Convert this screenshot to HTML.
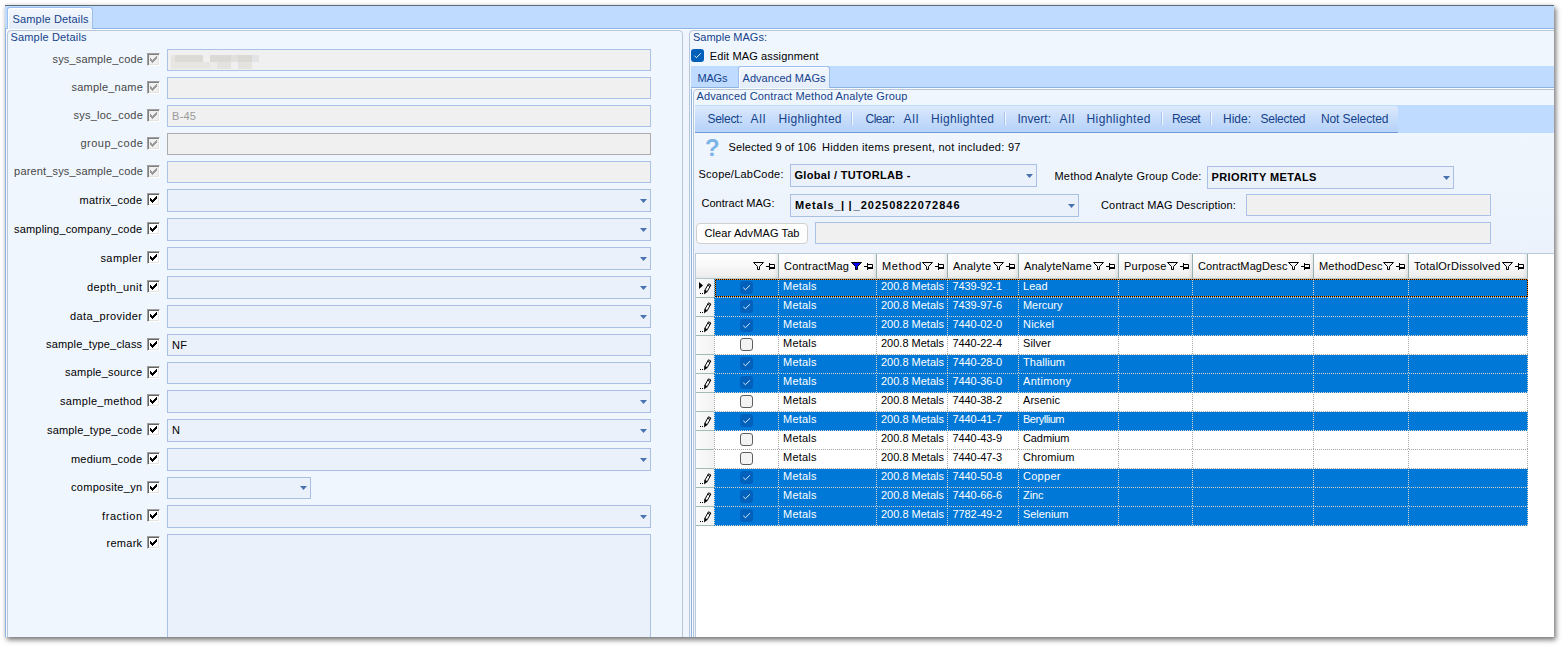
<!DOCTYPE html>
<html><head><meta charset="utf-8"><title>Sample Details</title>
<style>
*{box-sizing:border-box;margin:0;padding:0}
html,body{width:1563px;height:646px;overflow:hidden;background:#fff}
body{position:relative;font-family:"Liberation Sans",sans-serif;font-size:11px;color:#000;line-height:13px}
#app{position:absolute;left:5px;top:5px;width:1549px;height:632px;background:#eff5fd;box-shadow:2px 3px 5px 0 rgba(0,0,0,.5), 0 0 4px rgba(40,30,20,.13);overflow:hidden}
#w{position:absolute;left:-5px;top:-5px;width:1563px;height:646px}
#w div,#w span,#w svg{position:absolute}
#w span{white-space:pre;height:13px;line-height:13px}
.in{left:167px;width:484px;height:22px;background:#eaf1fb;border:1px solid #a9c0e4}
.in.d{background:#f0f0f0;border-color:#abc2e6}
.cb{left:167px;width:484px;height:23px;background:#eaf1fb;border:1px solid #a9c0e4}
.arr{width:7px;height:4px;background:#4872b0;clip-path:polygon(0 0,100% 0,50% 100%)}
.ck{left:147px;width:13px;height:13px;background:#fff;border:1px solid #a0a0a0;border-right-color:#fff;border-bottom-color:#fff;box-shadow:inset 1px 1px 0 #646464,inset -1px -1px 0 #e3e3e3}
.ck.d{background:#f0f0f0;border-color:#a0a0a0;border-right-color:#fff;border-bottom-color:#fff;box-shadow:inset 1px 1px 0 #808080,inset -1px -1px 0 #e3e3e3}
.b{font-weight:bold}
.sep{top:112px;width:2px;height:13px;border-left:1px solid #a9c5ec;border-right:1px solid #f2f7ff}
.cb2{height:23px;background:#eaf1fb;border:1px solid #a9c0e4}
.in2{height:22px;background:#f0f0f0;border:1px solid #abc2e6}
.hd{top:254px;height:25px;background:linear-gradient(90deg,rgba(0,0,0,0) calc(100% - 5px),rgba(60,80,80,.10) calc(100% - 1px),#98b0b0 calc(100% - 1px)),linear-gradient(#ffffff,#f9f9f9 50%,#eeeeee 90%,#e4e8e8);border-bottom:1px solid #b4c6c6}
.row{left:714px;width:814px;height:19px}
.row.s{background:#0078d7}
.row.u{background:#fff}
.vl{top:0;width:1px;height:19px}
.rh{left:696px;width:18px;height:19px;background:linear-gradient(90deg,#fbfbfb,#f2f2f2);border-bottom:1px solid #a3bab6}
.k{left:26px;top:2px;width:13px;height:13px;border-radius:3px}
.s .k{background:#0061bd}
.u .k{background:#f3f3f3;border:1px solid #5e5e5e}
</style></head>
<body><div id="app"><div id="w">
<div style="left:5px;top:5px;width:1550px;height:1px;background:#5d6b78"></div>
<div style="left:5px;top:6px;width:1550px;height:22px;background:#bfdbff"></div>
<div style="left:5px;top:28px;width:1550px;height:1px;background:#8db2e3"></div>
<div style="left:5px;top:29px;width:1550px;height:1px;background:#ffffff"></div>
<div style="left:5px;top:28px;width:1px;height:620px;background:#8db2e3"></div><div style="left:6px;top:29px;width:1px;height:620px;background:#f6f9fe"></div>
<div style="left:7px;top:7px;width:86px;height:22px;background:linear-gradient(#f3f7fd,#e3ecfa);border:1px solid #9dbfee;border-bottom:none;border-radius:3px 3px 0 0;box-shadow:inset 1px 1px 0 #fff"></div>
<span style="top:13px;letter-spacing:0.16px;left:12.5px;color:#15428b">Sample Details</span>
<div style="left:7px;top:30px;width:676px;height:620px;border:1px solid #b5c6d9;border-radius:4px 4px 0 0;background:#f0f6fe"></div>
<span style="top:31px;letter-spacing:0.16px;left:10.5px;color:#15428b">Sample Details</span>
<span style="top:53px;letter-spacing:0.16px;right:1420.0px;color:#474747">sys_sample_code</span>
<div class="ck d" style="top:53px"><svg width="7" height="7" viewBox="0 0 7 7" shape-rendering="crispEdges" style="left:2px;top:2px"><path d="M0 2h1v3h-1z M1 3h1v3h-1z M2 4h1v3h-1z M3 3h1v3h-1z M4 2h1v3h-1z M5 1h1v3h-1z M6 0h1v3h-1z" fill="#9a9a9a"/></svg></div>
<div class="in d" style="top:49px"></div>
<span style="top:81px;letter-spacing:0.22px;right:1420.0px;color:#474747">sample_name</span>
<div class="ck d" style="top:81px"><svg width="7" height="7" viewBox="0 0 7 7" shape-rendering="crispEdges" style="left:2px;top:2px"><path d="M0 2h1v3h-1z M1 3h1v3h-1z M2 4h1v3h-1z M3 3h1v3h-1z M4 2h1v3h-1z M5 1h1v3h-1z M6 0h1v3h-1z" fill="#9a9a9a"/></svg></div>
<div class="in d" style="top:77px"></div>
<span style="top:109px;letter-spacing:0.24px;right:1420.0px;color:#474747">sys_loc_code</span>
<div class="ck d" style="top:109px"><svg width="7" height="7" viewBox="0 0 7 7" shape-rendering="crispEdges" style="left:2px;top:2px"><path d="M0 2h1v3h-1z M1 3h1v3h-1z M2 4h1v3h-1z M3 3h1v3h-1z M4 2h1v3h-1z M5 1h1v3h-1z M6 0h1v3h-1z" fill="#9a9a9a"/></svg></div>
<div class="in d" style="top:105px"></div>
<span style="top:110px;letter-spacing:0.20px;left:172.1px;color:#9a9a9a">B-45</span>
<span style="top:137px;letter-spacing:0.47px;right:1419.7px;color:#474747">group_code</span>
<div class="ck d" style="top:137px"><svg width="7" height="7" viewBox="0 0 7 7" shape-rendering="crispEdges" style="left:2px;top:2px"><path d="M0 2h1v3h-1z M1 3h1v3h-1z M2 4h1v3h-1z M3 3h1v3h-1z M4 2h1v3h-1z M5 1h1v3h-1z M6 0h1v3h-1z" fill="#9a9a9a"/></svg></div>
<div class="in d" style="top:133px;border-color:#adadad"></div>
<span style="top:165px;letter-spacing:0.16px;right:1420.0px;color:#474747">parent_sys_sample_code</span>
<div class="ck d" style="top:165px"><svg width="7" height="7" viewBox="0 0 7 7" shape-rendering="crispEdges" style="left:2px;top:2px"><path d="M0 2h1v3h-1z M1 3h1v3h-1z M2 4h1v3h-1z M3 3h1v3h-1z M4 2h1v3h-1z M5 1h1v3h-1z M6 0h1v3h-1z" fill="#9a9a9a"/></svg></div>
<div class="in d" style="top:161px"></div>
<span style="top:194px;letter-spacing:0.26px;right:1420.7px">matrix_code</span>
<div class="ck" style="top:193px"><svg width="7" height="7" viewBox="0 0 7 7" shape-rendering="crispEdges" style="left:2px;top:2px"><path d="M0 2h1v3h-1z M1 3h1v3h-1z M2 4h1v3h-1z M3 3h1v3h-1z M4 2h1v3h-1z M5 1h1v3h-1z M6 0h1v3h-1z" fill="#000"/></svg></div>
<div class="cb" style="top:189px"></div>
<div class="arr" style="left:640px;top:199px"></div>
<span style="top:223px;letter-spacing:0.16px;right:1420.8px">sampling_company_code</span>
<div class="ck" style="top:222px"><svg width="7" height="7" viewBox="0 0 7 7" shape-rendering="crispEdges" style="left:2px;top:2px"><path d="M0 2h1v3h-1z M1 3h1v3h-1z M2 4h1v3h-1z M3 3h1v3h-1z M4 2h1v3h-1z M5 1h1v3h-1z M6 0h1v3h-1z" fill="#000"/></svg></div>
<div class="cb" style="top:218px"></div>
<div class="arr" style="left:640px;top:228px"></div>
<span style="top:252px;letter-spacing:0.40px;right:1420.6px">sampler</span>
<div class="ck" style="top:251px"><svg width="7" height="7" viewBox="0 0 7 7" shape-rendering="crispEdges" style="left:2px;top:2px"><path d="M0 2h1v3h-1z M1 3h1v3h-1z M2 4h1v3h-1z M3 3h1v3h-1z M4 2h1v3h-1z M5 1h1v3h-1z M6 0h1v3h-1z" fill="#000"/></svg></div>
<div class="cb" style="top:247px"></div>
<div class="arr" style="left:640px;top:257px"></div>
<span style="top:281px;letter-spacing:0.40px;right:1420.6px">depth_unit</span>
<div class="ck" style="top:280px"><svg width="7" height="7" viewBox="0 0 7 7" shape-rendering="crispEdges" style="left:2px;top:2px"><path d="M0 2h1v3h-1z M1 3h1v3h-1z M2 4h1v3h-1z M3 3h1v3h-1z M4 2h1v3h-1z M5 1h1v3h-1z M6 0h1v3h-1z" fill="#000"/></svg></div>
<div class="cb" style="top:276px"></div>
<div class="arr" style="left:640px;top:286px"></div>
<span style="top:310px;letter-spacing:0.39px;right:1420.6px">data_provider</span>
<div class="ck" style="top:309px"><svg width="7" height="7" viewBox="0 0 7 7" shape-rendering="crispEdges" style="left:2px;top:2px"><path d="M0 2h1v3h-1z M1 3h1v3h-1z M2 4h1v3h-1z M3 3h1v3h-1z M4 2h1v3h-1z M5 1h1v3h-1z M6 0h1v3h-1z" fill="#000"/></svg></div>
<div class="cb" style="top:305px"></div>
<div class="arr" style="left:640px;top:315px"></div>
<span style="top:338px;letter-spacing:0.15px;right:1420.8px">sample_type_class</span>
<div class="ck" style="top:338px"><svg width="7" height="7" viewBox="0 0 7 7" shape-rendering="crispEdges" style="left:2px;top:2px"><path d="M0 2h1v3h-1z M1 3h1v3h-1z M2 4h1v3h-1z M3 3h1v3h-1z M4 2h1v3h-1z M5 1h1v3h-1z M6 0h1v3h-1z" fill="#000"/></svg></div>
<div class="in" style="top:334px"></div>
<span style="top:339px;letter-spacing:0.20px;left:172.1px">NF</span>
<span style="top:366px;letter-spacing:0.20px;right:1420.8px">sample_source</span>
<div class="ck" style="top:366px"><svg width="7" height="7" viewBox="0 0 7 7" shape-rendering="crispEdges" style="left:2px;top:2px"><path d="M0 2h1v3h-1z M1 3h1v3h-1z M2 4h1v3h-1z M3 3h1v3h-1z M4 2h1v3h-1z M5 1h1v3h-1z M6 0h1v3h-1z" fill="#000"/></svg></div>
<div class="in" style="top:362px"></div>
<span style="top:395px;letter-spacing:0.31px;right:1420.7px">sample_method</span>
<div class="ck" style="top:394px"><svg width="7" height="7" viewBox="0 0 7 7" shape-rendering="crispEdges" style="left:2px;top:2px"><path d="M0 2h1v3h-1z M1 3h1v3h-1z M2 4h1v3h-1z M3 3h1v3h-1z M4 2h1v3h-1z M5 1h1v3h-1z M6 0h1v3h-1z" fill="#000"/></svg></div>
<div class="cb" style="top:390px"></div>
<div class="arr" style="left:640px;top:400px"></div>
<span style="top:424px;letter-spacing:0.18px;right:1420.8px">sample_type_code</span>
<div class="ck" style="top:423px"><svg width="7" height="7" viewBox="0 0 7 7" shape-rendering="crispEdges" style="left:2px;top:2px"><path d="M0 2h1v3h-1z M1 3h1v3h-1z M2 4h1v3h-1z M3 3h1v3h-1z M4 2h1v3h-1z M5 1h1v3h-1z M6 0h1v3h-1z" fill="#000"/></svg></div>
<div class="cb" style="top:419px"></div>
<div class="arr" style="left:640px;top:429px"></div>
<span style="top:424px;letter-spacing:0.20px;left:172.1px">N</span>
<span style="top:453px;letter-spacing:0.19px;right:1420.8px">medium_code</span>
<div class="ck" style="top:452px"><svg width="7" height="7" viewBox="0 0 7 7" shape-rendering="crispEdges" style="left:2px;top:2px"><path d="M0 2h1v3h-1z M1 3h1v3h-1z M2 4h1v3h-1z M3 3h1v3h-1z M4 2h1v3h-1z M5 1h1v3h-1z M6 0h1v3h-1z" fill="#000"/></svg></div>
<div class="cb" style="top:448px"></div>
<div class="arr" style="left:640px;top:458px"></div>
<span style="top:481px;letter-spacing:0.28px;right:1420.7px">composite_yn</span>
<div class="ck" style="top:481px"><svg width="7" height="7" viewBox="0 0 7 7" shape-rendering="crispEdges" style="left:2px;top:2px"><path d="M0 2h1v3h-1z M1 3h1v3h-1z M2 4h1v3h-1z M3 3h1v3h-1z M4 2h1v3h-1z M5 1h1v3h-1z M6 0h1v3h-1z" fill="#000"/></svg></div>
<div class="cb" style="top:477px;width:144px;height:22px"></div>
<div class="arr" style="left:300px;top:486px"></div>
<span style="top:510px;letter-spacing:0.56px;right:1420.4px">fraction</span>
<div class="ck" style="top:509px"><svg width="7" height="7" viewBox="0 0 7 7" shape-rendering="crispEdges" style="left:2px;top:2px"><path d="M0 2h1v3h-1z M1 3h1v3h-1z M2 4h1v3h-1z M3 3h1v3h-1z M4 2h1v3h-1z M5 1h1v3h-1z M6 0h1v3h-1z" fill="#000"/></svg></div>
<div class="cb" style="top:505px"></div>
<div class="arr" style="left:640px;top:515px"></div>
<span style="top:537px;letter-spacing:0.25px;right:1420.7px">remark</span>
<div class="ck" style="top:536px"><svg width="7" height="7" viewBox="0 0 7 7" shape-rendering="crispEdges" style="left:2px;top:2px"><path d="M0 2h1v3h-1z M1 3h1v3h-1z M2 4h1v3h-1z M3 3h1v3h-1z M4 2h1v3h-1z M5 1h1v3h-1z M6 0h1v3h-1z" fill="#000"/></svg></div>
<div class="in" style="top:534px;height:120px"></div>
<div style="left:171px;top:55px;width:4px;height:7px;background:#e8e5e0"></div>
<div style="left:175px;top:55px;width:28px;height:7px;background:#dcdbd6"></div>
<div style="left:210px;top:55px;width:21px;height:7px;background:#dbdad6"></div>
<div style="left:231px;top:55px;width:7px;height:7px;background:#e2e1de"></div>
<div style="left:238px;top:55px;width:14px;height:7px;background:#dad9d3"></div>
<div style="left:252px;top:55px;width:7px;height:7px;background:#e3e4e6"></div>
<div style="left:171px;top:62px;width:4px;height:7px;background:#e9e6e2"></div>
<div style="left:175px;top:62px;width:35px;height:7px;background:#e7e6e3"></div>
<div style="left:210px;top:62px;width:7px;height:7px;background:#ebebe9"></div>
<div style="left:217px;top:62px;width:14px;height:7px;background:#e3e2df"></div>
<div style="left:238px;top:62px;width:14px;height:7px;background:#e4e3e0"></div>
<div style="left:689px;top:30px;width:880px;height:620px;border:1px solid #b5c6d9;border-radius:4px 0 0 0;background:#f0f6fe"></div>
<span style="top:31px;letter-spacing:0.00px;left:693.0px;color:#15428b">Sample MAGs:</span>
<div style="left:691px;top:49px;width:13px;height:13px;background:#005fb8;border-radius:3px"></div>
<svg width="13" height="13" viewBox="0 0 13 13" style="left:691px;top:49px"><path d="M3.4 6.7 L5.4 8.7 L9.8 4.3" fill="none" stroke="#fff" stroke-width="1" opacity=".92"/></svg>
<span style="top:50px;letter-spacing:0.13px;left:709.8px">Edit MAG assignment</span>
<div style="left:691px;top:66px;width:870px;height:22px;background:#bfdbff"></div>
<div style="left:691px;top:87px;width:870px;height:1px;background:#8db2e3"></div>
<span style="top:72px;letter-spacing:-0.19px;left:697.5px;color:#15428b">MAGs</span>
<div style="left:738px;top:66px;width:92px;height:23px;background:linear-gradient(#f3f7fd,#e3ecfa);border:1px solid #9dbfee;border-bottom:none;border-radius:3px 3px 0 0;box-shadow:inset 1px 1px 0 #fff"></div>
<span style="top:72px;letter-spacing:0.04px;left:742.5px;color:#15428b">Advanced MAGs</span>
<div style="left:691px;top:88px;width:870px;height:560px;background:#f0f6fe;border-left:1px solid #8db2e3;border-top:1px solid #fbfdff"></div><div style="left:692px;top:88px;width:1px;height:560px;background:#f8fbff"></div>
<div style="left:693px;top:89px;width:870px;height:560px;border:1px solid #b5c6d9;border-radius:4px 0 0 0;background:linear-gradient(#f0f6fe 0,#f0f6fe 44px,#ecf2fb 164px,#ecf2fb 100%)"></div>
<span style="top:90px;letter-spacing:0.13px;left:696.5px;color:#15428b">Advanced Contract Method Analyte Group</span>
<div style="left:695px;top:105px;width:870px;height:28px;background:#bfdbff"></div>
<div style="left:695px;top:106px;width:703px;height:27px;background:linear-gradient(#dde9fc,#c9defb 45%,#b9d4f9 90%,#b9d4f9);border-bottom:1px solid #6f9ad8;border-radius:0 3px 1px 0"></div>
<span style="top:112px;letter-spacing:-0.28px;left:707.5px;font-size:12px;color:#15428b;height:14px;line-height:14px">Select:</span>
<span style="top:112px;letter-spacing:0.83px;left:750.5px;font-size:12px;color:#15428b;height:14px;line-height:14px">All</span>
<span style="top:112px;letter-spacing:0.30px;left:778.5px;font-size:12px;color:#15428b;height:14px;line-height:14px">Highlighted</span>
<span style="top:112px;letter-spacing:-0.50px;left:865.5px;font-size:12px;color:#15428b;height:14px;line-height:14px">Clear:</span>
<span style="top:112px;letter-spacing:0.83px;left:903.5px;font-size:12px;color:#15428b;height:14px;line-height:14px">All</span>
<span style="top:112px;letter-spacing:0.30px;left:931.0px;font-size:12px;color:#15428b;height:14px;line-height:14px">Highlighted</span>
<span style="top:112px;letter-spacing:0.02px;left:1017.5px;font-size:12px;color:#15428b;height:14px;line-height:14px">Invert:</span>
<span style="top:112px;letter-spacing:0.83px;left:1059.5px;font-size:12px;color:#15428b;height:14px;line-height:14px">All</span>
<span style="top:112px;letter-spacing:0.40px;left:1086.5px;font-size:12px;color:#15428b;height:14px;line-height:14px">Highlighted</span>
<span style="top:112px;letter-spacing:-0.70px;left:1172.0px;font-size:12px;color:#15428b;height:14px;line-height:14px">Reset</span>
<span style="top:112px;letter-spacing:-0.00px;left:1223.0px;font-size:12px;color:#15428b;height:14px;line-height:14px">Hide:</span>
<span style="top:112px;letter-spacing:-0.24px;left:1260.5px;font-size:12px;color:#15428b;height:14px;line-height:14px">Selected</span>
<span style="top:112px;letter-spacing:-0.11px;left:1321.0px;font-size:12px;color:#15428b;height:14px;line-height:14px">Not Selected</span>
<div class="sep" style="left:851px"></div>
<div class="sep" style="left:1004px"></div>
<div class="sep" style="left:1161px"></div>
<div class="sep" style="left:1210px"></div>
<span style="top:135px;letter-spacing:-0.70px;left:705.0px;font-size:24px;font-weight:bold;color:#7db4e6;height:26px;line-height:26px">?</span>
<span style="top:141px;letter-spacing:0.12px;left:728.5px">Selected 9 of 106</span>
<span style="top:141px;letter-spacing:0.29px;left:822.0px">Hidden items present, not included: 97</span>
<span style="top:168px;letter-spacing:0.23px;left:698.5px">Scope/LabCode:</span>
<div class="cb2" style="left:790px;top:164px;width:247px"></div>
<span style="top:169px;letter-spacing:0.31px;left:794.5px;font-weight:bold">Global / TUTORLAB -</span>
<div class="arr" style="left:1026px;top:174px"></div>
<span style="top:170px;letter-spacing:0.20px;left:1054.5px">Method Analyte Group Code:</span>
<div class="cb2" style="left:1207px;top:166px;width:247px"></div>
<span style="top:171px;letter-spacing:0.41px;left:1211.5px;font-weight:bold">PRIORITY METALS</span>
<div class="arr" style="left:1443px;top:176px"></div>
<span style="top:197px;letter-spacing:0.02px;left:701.5px">Contract MAG:</span>
<div class="cb2" style="left:790px;top:194px;width:289px"></div>
<span style="top:199px;letter-spacing:0.86px;left:795.0px;font-weight:bold">Metals_</span>
<span style="top:199px;letter-spacing:0.92px;left:841.0px;font-weight:bold">|</span>
<span style="top:199px;letter-spacing:0.92px;left:848.5px;font-weight:bold">|</span>
<span style="top:199px;letter-spacing:1.02px;left:853.5px;font-weight:bold">_20250822072846</span>
<div class="arr" style="left:1068px;top:204px"></div>
<span style="top:199px;letter-spacing:0.17px;left:1101.0px">Contract MAG Description:</span>
<div class="in2" style="left:1246px;top:194px;width:245px"></div>
<div style="left:696px;top:223px;width:112px;height:21px;background:#fdfdfd;border:1px solid #d0d0d0;border-radius:4px"></div>
<span style="top:227px;letter-spacing:0.11px;left:704.5px">Clear AdvMAG Tab</span>
<div class="in2" style="left:815px;top:222px;width:676px"></div>
<div style="left:696px;top:253px;width:870px;height:400px;background:#fff"></div>
<div style="left:695px;top:253px;width:1px;height:400px;background:#bccbd9"></div>
<div style="left:696px;top:253px;width:870px;height:1px;background:#bccbd9"></div>
<div class="hd" style="left:696px;width:83px"></div>
<svg width="11" height="8" viewBox="0 0 11 8" style="left:753px;top:262px"><path d="M0.5 0.5 H10.5 L6.5 4.5 V7.5 H4.5 V4.5 Z" fill="#f4f4f4" stroke="#000" stroke-width="1" stroke-linejoin="miter"/></svg>
<svg width="9" height="7" viewBox="0 0 9 7" style="left:766px;top:263px"><path d="M0 3.5 H3.5 M3.5 0 V7 M3.5 1.5 H8.5 V5 M3.5 4.5 H9 M3.5 5.5 H9" fill="none" stroke="#000" stroke-width="1"/></svg>
<div class="hd" style="left:779px;width:98px"></div>
<span style="top:260px;letter-spacing:0.20px;left:784.0px">ContractMag</span>
<svg width="11" height="8" viewBox="0 0 11 8" style="left:851px;top:262px"><path d="M0.5 0.5 H10.5 L6.5 4.5 V7.5 H4.5 V4.5 Z" fill="#0000ff" stroke="#000" stroke-width="1" stroke-linejoin="miter"/></svg>
<svg width="9" height="7" viewBox="0 0 9 7" style="left:864px;top:263px"><path d="M0 3.5 H3.5 M3.5 0 V7 M3.5 1.5 H8.5 V5 M3.5 4.5 H9 M3.5 5.5 H9" fill="none" stroke="#000" stroke-width="1"/></svg>
<div class="hd" style="left:877px;width:71px"></div>
<span style="top:260px;letter-spacing:0.56px;left:882.0px">Method</span>
<svg width="11" height="8" viewBox="0 0 11 8" style="left:922px;top:262px"><path d="M0.5 0.5 H10.5 L6.5 4.5 V7.5 H4.5 V4.5 Z" fill="#f4f4f4" stroke="#000" stroke-width="1" stroke-linejoin="miter"/></svg>
<svg width="9" height="7" viewBox="0 0 9 7" style="left:935px;top:263px"><path d="M0 3.5 H3.5 M3.5 0 V7 M3.5 1.5 H8.5 V5 M3.5 4.5 H9 M3.5 5.5 H9" fill="none" stroke="#000" stroke-width="1"/></svg>
<div class="hd" style="left:948px;width:71px"></div>
<span style="top:260px;letter-spacing:0.22px;left:953.0px">Analyte</span>
<svg width="11" height="8" viewBox="0 0 11 8" style="left:993px;top:262px"><path d="M0.5 0.5 H10.5 L6.5 4.5 V7.5 H4.5 V4.5 Z" fill="#f4f4f4" stroke="#000" stroke-width="1" stroke-linejoin="miter"/></svg>
<svg width="9" height="7" viewBox="0 0 9 7" style="left:1006px;top:263px"><path d="M0 3.5 H3.5 M3.5 0 V7 M3.5 1.5 H8.5 V5 M3.5 4.5 H9 M3.5 5.5 H9" fill="none" stroke="#000" stroke-width="1"/></svg>
<div class="hd" style="left:1019px;width:100px"></div>
<span style="top:260px;letter-spacing:0.15px;left:1024.0px">AnalyteName</span>
<svg width="11" height="8" viewBox="0 0 11 8" style="left:1093px;top:262px"><path d="M0.5 0.5 H10.5 L6.5 4.5 V7.5 H4.5 V4.5 Z" fill="#f4f4f4" stroke="#000" stroke-width="1" stroke-linejoin="miter"/></svg>
<svg width="9" height="7" viewBox="0 0 9 7" style="left:1106px;top:263px"><path d="M0 3.5 H3.5 M3.5 0 V7 M3.5 1.5 H8.5 V5 M3.5 4.5 H9 M3.5 5.5 H9" fill="none" stroke="#000" stroke-width="1"/></svg>
<div class="hd" style="left:1119px;width:74px"></div>
<span style="top:260px;letter-spacing:0.25px;left:1124.0px">Purpose</span>
<svg width="11" height="8" viewBox="0 0 11 8" style="left:1167px;top:262px"><path d="M0.5 0.5 H10.5 L6.5 4.5 V7.5 H4.5 V4.5 Z" fill="#f4f4f4" stroke="#000" stroke-width="1" stroke-linejoin="miter"/></svg>
<svg width="9" height="7" viewBox="0 0 9 7" style="left:1180px;top:263px"><path d="M0 3.5 H3.5 M3.5 0 V7 M3.5 1.5 H8.5 V5 M3.5 4.5 H9 M3.5 5.5 H9" fill="none" stroke="#000" stroke-width="1"/></svg>
<div class="hd" style="left:1193px;width:121px"></div>
<span style="top:260px;letter-spacing:0.10px;left:1198.0px">ContractMagDesc</span>
<svg width="11" height="8" viewBox="0 0 11 8" style="left:1288px;top:262px"><path d="M0.5 0.5 H10.5 L6.5 4.5 V7.5 H4.5 V4.5 Z" fill="#f4f4f4" stroke="#000" stroke-width="1" stroke-linejoin="miter"/></svg>
<svg width="9" height="7" viewBox="0 0 9 7" style="left:1301px;top:263px"><path d="M0 3.5 H3.5 M3.5 0 V7 M3.5 1.5 H8.5 V5 M3.5 4.5 H9 M3.5 5.5 H9" fill="none" stroke="#000" stroke-width="1"/></svg>
<div class="hd" style="left:1314px;width:95px"></div>
<span style="top:260px;letter-spacing:0.19px;left:1319.0px">MethodDesc</span>
<svg width="11" height="8" viewBox="0 0 11 8" style="left:1383px;top:262px"><path d="M0.5 0.5 H10.5 L6.5 4.5 V7.5 H4.5 V4.5 Z" fill="#f4f4f4" stroke="#000" stroke-width="1" stroke-linejoin="miter"/></svg>
<svg width="9" height="7" viewBox="0 0 9 7" style="left:1396px;top:263px"><path d="M0 3.5 H3.5 M3.5 0 V7 M3.5 1.5 H8.5 V5 M3.5 4.5 H9 M3.5 5.5 H9" fill="none" stroke="#000" stroke-width="1"/></svg>
<div class="hd" style="left:1409px;width:119px"></div>
<span style="top:260px;letter-spacing:0.22px;left:1414.0px">TotalOrDissolved</span>
<svg width="11" height="8" viewBox="0 0 11 8" style="left:1502px;top:262px"><path d="M0.5 0.5 H10.5 L6.5 4.5 V7.5 H4.5 V4.5 Z" fill="#f4f4f4" stroke="#000" stroke-width="1" stroke-linejoin="miter"/></svg>
<svg width="9" height="7" viewBox="0 0 9 7" style="left:1515px;top:263px"><path d="M0 3.5 H3.5 M3.5 0 V7 M3.5 1.5 H8.5 V5 M3.5 4.5 H9 M3.5 5.5 H9" fill="none" stroke="#000" stroke-width="1"/></svg>
<div class="rh" style="top:279px"><svg width="9" height="12" viewBox="0 0 9 12" style="left:7px;top:4px"><path d="M5.5 0.8 L7.9 2 L4.2 8.6 L1.8 7.4 Z" fill="#fff" stroke="#000" stroke-width="1"/><path d="M4.6 2.2 L7 3.4" stroke="#000" stroke-width="1"/><path d="M1.3 7 L4.6 8.8 L1 11.6 Z" fill="#000"/></svg><div style="left:4px;top:14px;width:1px;height:1px;background:#000"></div><div style="left:6px;top:14px;width:1px;height:1px;background:#000"></div><svg width="5" height="8" viewBox="0 0 5 8" style="left:3px;top:3px"><path d="M0 0 L4 3.5 L0 7 Z"/></svg></div>
<div class="row s" style="top:279px">
<div class="k"></div><svg width="13" height="13" viewBox="0 0 13 13" style="left:26px;top:2px"><path d="M3.3 6.7 L5.4 8.7 L9.9 4.3" fill="none" stroke="#eaf1fb" stroke-width="0.95"/></svg>
<span style="top:1px;letter-spacing:0.22px;left:69.0px;color:#fff">Metals</span>
<span style="top:1px;letter-spacing:0.00px;left:167.0px;color:#fff">200.8 Metals</span>
<span style="top:1px;letter-spacing:-0.08px;left:238.5px;color:#fff">7439-92-1</span>
<span style="top:1px;letter-spacing:0.01px;left:309.0px;color:#fff">Lead</span>
<div class="vl" style="left:0px;background:repeating-linear-gradient(transparent 0 1px,#d6d2c6 1px 2px)"></div>
<div class="vl" style="left:64px;background:repeating-linear-gradient(transparent 0 1px,#d6d2c6 1px 2px)"></div>
<div class="vl" style="left:162px;background:repeating-linear-gradient(transparent 0 1px,#d6d2c6 1px 2px)"></div>
<div class="vl" style="left:233px;background:repeating-linear-gradient(transparent 0 1px,#d6d2c6 1px 2px)"></div>
<div class="vl" style="left:304px;background:repeating-linear-gradient(transparent 0 1px,#d6d2c6 1px 2px)"></div>
<div class="vl" style="left:404px;background:repeating-linear-gradient(transparent 0 1px,#d6d2c6 1px 2px)"></div>
<div class="vl" style="left:478px;background:repeating-linear-gradient(transparent 0 1px,#d6d2c6 1px 2px)"></div>
<div class="vl" style="left:599px;background:repeating-linear-gradient(transparent 0 1px,#d6d2c6 1px 2px)"></div>
<div class="vl" style="left:694px;background:repeating-linear-gradient(transparent 0 1px,#d6d2c6 1px 2px)"></div>
<div class="vl" style="left:813px;background:repeating-linear-gradient(transparent 0 1px,#d6d2c6 1px 2px)"></div>
<div style="left:0;top:18px;width:814px;height:1px;background:repeating-linear-gradient(90deg,transparent 0 1px,#d6d2c6 1px 2px)"></div>
<div style="left:1px;top:0;width:813px;height:1px;background:repeating-linear-gradient(90deg,#ff8c1a 0 1px,#000 1px 2px)"></div>
<div style="left:1px;top:17px;width:813px;height:1px;background:repeating-linear-gradient(90deg,#ff8c1a 0 1px,#000 1px 2px)"></div>
<div style="left:1px;top:0;width:1px;height:18px;background:repeating-linear-gradient(#ff8c1a 0 1px,#000 1px 2px)"></div>
<div style="left:813px;top:0;width:1px;height:18px;background:repeating-linear-gradient(#ff8c1a 0 1px,#000 1px 2px)"></div>
</div>
<div class="rh" style="top:298px"><svg width="9" height="12" viewBox="0 0 9 12" style="left:7px;top:4px"><path d="M5.5 0.8 L7.9 2 L4.2 8.6 L1.8 7.4 Z" fill="#fff" stroke="#000" stroke-width="1"/><path d="M4.6 2.2 L7 3.4" stroke="#000" stroke-width="1"/><path d="M1.3 7 L4.6 8.8 L1 11.6 Z" fill="#000"/></svg><div style="left:4px;top:14px;width:1px;height:1px;background:#000"></div><div style="left:6px;top:14px;width:1px;height:1px;background:#000"></div></div>
<div class="row s" style="top:298px">
<div class="k"></div><svg width="13" height="13" viewBox="0 0 13 13" style="left:26px;top:2px"><path d="M3.3 6.7 L5.4 8.7 L9.9 4.3" fill="none" stroke="#eaf1fb" stroke-width="0.95"/></svg>
<span style="top:1px;letter-spacing:0.22px;left:69.0px;color:#fff">Metals</span>
<span style="top:1px;letter-spacing:0.00px;left:167.0px;color:#fff">200.8 Metals</span>
<span style="top:1px;letter-spacing:-0.08px;left:238.5px;color:#fff">7439-97-6</span>
<span style="top:1px;letter-spacing:-0.04px;left:309.0px;color:#fff">Mercury</span>
<div class="vl" style="left:0px;background:repeating-linear-gradient(transparent 0 1px,#d6d2c6 1px 2px)"></div>
<div class="vl" style="left:64px;background:repeating-linear-gradient(transparent 0 1px,#d6d2c6 1px 2px)"></div>
<div class="vl" style="left:162px;background:repeating-linear-gradient(transparent 0 1px,#d6d2c6 1px 2px)"></div>
<div class="vl" style="left:233px;background:repeating-linear-gradient(transparent 0 1px,#d6d2c6 1px 2px)"></div>
<div class="vl" style="left:304px;background:repeating-linear-gradient(transparent 0 1px,#d6d2c6 1px 2px)"></div>
<div class="vl" style="left:404px;background:repeating-linear-gradient(transparent 0 1px,#d6d2c6 1px 2px)"></div>
<div class="vl" style="left:478px;background:repeating-linear-gradient(transparent 0 1px,#d6d2c6 1px 2px)"></div>
<div class="vl" style="left:599px;background:repeating-linear-gradient(transparent 0 1px,#d6d2c6 1px 2px)"></div>
<div class="vl" style="left:694px;background:repeating-linear-gradient(transparent 0 1px,#d6d2c6 1px 2px)"></div>
<div class="vl" style="left:813px;background:repeating-linear-gradient(transparent 0 1px,#d6d2c6 1px 2px)"></div>
<div style="left:0;top:18px;width:814px;height:1px;background:repeating-linear-gradient(90deg,transparent 0 1px,#d6d2c6 1px 2px)"></div>
</div>
<div class="rh" style="top:317px"><svg width="9" height="12" viewBox="0 0 9 12" style="left:7px;top:4px"><path d="M5.5 0.8 L7.9 2 L4.2 8.6 L1.8 7.4 Z" fill="#fff" stroke="#000" stroke-width="1"/><path d="M4.6 2.2 L7 3.4" stroke="#000" stroke-width="1"/><path d="M1.3 7 L4.6 8.8 L1 11.6 Z" fill="#000"/></svg><div style="left:4px;top:14px;width:1px;height:1px;background:#000"></div><div style="left:6px;top:14px;width:1px;height:1px;background:#000"></div></div>
<div class="row s" style="top:317px">
<div class="k"></div><svg width="13" height="13" viewBox="0 0 13 13" style="left:26px;top:2px"><path d="M3.3 6.7 L5.4 8.7 L9.9 4.3" fill="none" stroke="#eaf1fb" stroke-width="0.95"/></svg>
<span style="top:1px;letter-spacing:0.22px;left:69.0px;color:#fff">Metals</span>
<span style="top:1px;letter-spacing:0.00px;left:167.0px;color:#fff">200.8 Metals</span>
<span style="top:1px;letter-spacing:-0.08px;left:238.5px;color:#fff">7440-02-0</span>
<span style="top:1px;letter-spacing:0.21px;left:309.0px;color:#fff">Nickel</span>
<div class="vl" style="left:0px;background:repeating-linear-gradient(transparent 0 1px,#d6d2c6 1px 2px)"></div>
<div class="vl" style="left:64px;background:repeating-linear-gradient(transparent 0 1px,#d6d2c6 1px 2px)"></div>
<div class="vl" style="left:162px;background:repeating-linear-gradient(transparent 0 1px,#d6d2c6 1px 2px)"></div>
<div class="vl" style="left:233px;background:repeating-linear-gradient(transparent 0 1px,#d6d2c6 1px 2px)"></div>
<div class="vl" style="left:304px;background:repeating-linear-gradient(transparent 0 1px,#d6d2c6 1px 2px)"></div>
<div class="vl" style="left:404px;background:repeating-linear-gradient(transparent 0 1px,#d6d2c6 1px 2px)"></div>
<div class="vl" style="left:478px;background:repeating-linear-gradient(transparent 0 1px,#d6d2c6 1px 2px)"></div>
<div class="vl" style="left:599px;background:repeating-linear-gradient(transparent 0 1px,#d6d2c6 1px 2px)"></div>
<div class="vl" style="left:694px;background:repeating-linear-gradient(transparent 0 1px,#d6d2c6 1px 2px)"></div>
<div class="vl" style="left:813px;background:repeating-linear-gradient(transparent 0 1px,#d6d2c6 1px 2px)"></div>
<div style="left:0;top:18px;width:814px;height:1px;background:repeating-linear-gradient(90deg,transparent 0 1px,#d6d2c6 1px 2px)"></div>
</div>
<div class="rh" style="top:336px"></div>
<div class="row u" style="top:336px">
<div class="k"></div>
<span style="top:1px;letter-spacing:0.22px;left:69.0px">Metals</span>
<span style="top:1px;letter-spacing:0.00px;left:167.0px">200.8 Metals</span>
<span style="top:1px;letter-spacing:-0.08px;left:238.5px">7440-22-4</span>
<span style="top:1px;letter-spacing:0.10px;left:309.0px">Silver</span>
<div class="vl" style="left:0px;background:repeating-linear-gradient(transparent 0 1px,#a6a6a6 1px 2px)"></div>
<div class="vl" style="left:64px;background:repeating-linear-gradient(transparent 0 1px,#a6a6a6 1px 2px)"></div>
<div class="vl" style="left:162px;background:repeating-linear-gradient(transparent 0 1px,#a6a6a6 1px 2px)"></div>
<div class="vl" style="left:233px;background:repeating-linear-gradient(transparent 0 1px,#a6a6a6 1px 2px)"></div>
<div class="vl" style="left:304px;background:repeating-linear-gradient(transparent 0 1px,#a6a6a6 1px 2px)"></div>
<div class="vl" style="left:404px;background:repeating-linear-gradient(transparent 0 1px,#a6a6a6 1px 2px)"></div>
<div class="vl" style="left:478px;background:repeating-linear-gradient(transparent 0 1px,#a6a6a6 1px 2px)"></div>
<div class="vl" style="left:599px;background:repeating-linear-gradient(transparent 0 1px,#a6a6a6 1px 2px)"></div>
<div class="vl" style="left:694px;background:repeating-linear-gradient(transparent 0 1px,#a6a6a6 1px 2px)"></div>
<div class="vl" style="left:813px;background:repeating-linear-gradient(transparent 0 1px,#a6a6a6 1px 2px)"></div>
<div style="left:0;top:18px;width:814px;height:1px;background:repeating-linear-gradient(90deg,transparent 0 1px,#a6a6a6 1px 2px)"></div>
</div>
<div class="rh" style="top:355px"><svg width="9" height="12" viewBox="0 0 9 12" style="left:7px;top:4px"><path d="M5.5 0.8 L7.9 2 L4.2 8.6 L1.8 7.4 Z" fill="#fff" stroke="#000" stroke-width="1"/><path d="M4.6 2.2 L7 3.4" stroke="#000" stroke-width="1"/><path d="M1.3 7 L4.6 8.8 L1 11.6 Z" fill="#000"/></svg><div style="left:4px;top:14px;width:1px;height:1px;background:#000"></div><div style="left:6px;top:14px;width:1px;height:1px;background:#000"></div></div>
<div class="row s" style="top:355px">
<div class="k"></div><svg width="13" height="13" viewBox="0 0 13 13" style="left:26px;top:2px"><path d="M3.3 6.7 L5.4 8.7 L9.9 4.3" fill="none" stroke="#eaf1fb" stroke-width="0.95"/></svg>
<span style="top:1px;letter-spacing:0.22px;left:69.0px;color:#fff">Metals</span>
<span style="top:1px;letter-spacing:0.00px;left:167.0px;color:#fff">200.8 Metals</span>
<span style="top:1px;letter-spacing:-0.08px;left:238.5px;color:#fff">7440-28-0</span>
<span style="top:1px;letter-spacing:0.06px;left:309.0px;color:#fff">Thallium</span>
<div class="vl" style="left:0px;background:repeating-linear-gradient(transparent 0 1px,#d6d2c6 1px 2px)"></div>
<div class="vl" style="left:64px;background:repeating-linear-gradient(transparent 0 1px,#d6d2c6 1px 2px)"></div>
<div class="vl" style="left:162px;background:repeating-linear-gradient(transparent 0 1px,#d6d2c6 1px 2px)"></div>
<div class="vl" style="left:233px;background:repeating-linear-gradient(transparent 0 1px,#d6d2c6 1px 2px)"></div>
<div class="vl" style="left:304px;background:repeating-linear-gradient(transparent 0 1px,#d6d2c6 1px 2px)"></div>
<div class="vl" style="left:404px;background:repeating-linear-gradient(transparent 0 1px,#d6d2c6 1px 2px)"></div>
<div class="vl" style="left:478px;background:repeating-linear-gradient(transparent 0 1px,#d6d2c6 1px 2px)"></div>
<div class="vl" style="left:599px;background:repeating-linear-gradient(transparent 0 1px,#d6d2c6 1px 2px)"></div>
<div class="vl" style="left:694px;background:repeating-linear-gradient(transparent 0 1px,#d6d2c6 1px 2px)"></div>
<div class="vl" style="left:813px;background:repeating-linear-gradient(transparent 0 1px,#d6d2c6 1px 2px)"></div>
<div style="left:0;top:18px;width:814px;height:1px;background:repeating-linear-gradient(90deg,transparent 0 1px,#d6d2c6 1px 2px)"></div>
</div>
<div class="rh" style="top:374px"><svg width="9" height="12" viewBox="0 0 9 12" style="left:7px;top:4px"><path d="M5.5 0.8 L7.9 2 L4.2 8.6 L1.8 7.4 Z" fill="#fff" stroke="#000" stroke-width="1"/><path d="M4.6 2.2 L7 3.4" stroke="#000" stroke-width="1"/><path d="M1.3 7 L4.6 8.8 L1 11.6 Z" fill="#000"/></svg><div style="left:4px;top:14px;width:1px;height:1px;background:#000"></div><div style="left:6px;top:14px;width:1px;height:1px;background:#000"></div></div>
<div class="row s" style="top:374px">
<div class="k"></div><svg width="13" height="13" viewBox="0 0 13 13" style="left:26px;top:2px"><path d="M3.3 6.7 L5.4 8.7 L9.9 4.3" fill="none" stroke="#eaf1fb" stroke-width="0.95"/></svg>
<span style="top:1px;letter-spacing:0.22px;left:69.0px;color:#fff">Metals</span>
<span style="top:1px;letter-spacing:0.00px;left:167.0px;color:#fff">200.8 Metals</span>
<span style="top:1px;letter-spacing:-0.08px;left:238.5px;color:#fff">7440-36-0</span>
<span style="top:1px;letter-spacing:0.31px;left:309.0px;color:#fff">Antimony</span>
<div class="vl" style="left:0px;background:repeating-linear-gradient(transparent 0 1px,#d6d2c6 1px 2px)"></div>
<div class="vl" style="left:64px;background:repeating-linear-gradient(transparent 0 1px,#d6d2c6 1px 2px)"></div>
<div class="vl" style="left:162px;background:repeating-linear-gradient(transparent 0 1px,#d6d2c6 1px 2px)"></div>
<div class="vl" style="left:233px;background:repeating-linear-gradient(transparent 0 1px,#d6d2c6 1px 2px)"></div>
<div class="vl" style="left:304px;background:repeating-linear-gradient(transparent 0 1px,#d6d2c6 1px 2px)"></div>
<div class="vl" style="left:404px;background:repeating-linear-gradient(transparent 0 1px,#d6d2c6 1px 2px)"></div>
<div class="vl" style="left:478px;background:repeating-linear-gradient(transparent 0 1px,#d6d2c6 1px 2px)"></div>
<div class="vl" style="left:599px;background:repeating-linear-gradient(transparent 0 1px,#d6d2c6 1px 2px)"></div>
<div class="vl" style="left:694px;background:repeating-linear-gradient(transparent 0 1px,#d6d2c6 1px 2px)"></div>
<div class="vl" style="left:813px;background:repeating-linear-gradient(transparent 0 1px,#d6d2c6 1px 2px)"></div>
<div style="left:0;top:18px;width:814px;height:1px;background:repeating-linear-gradient(90deg,transparent 0 1px,#d6d2c6 1px 2px)"></div>
</div>
<div class="rh" style="top:393px"></div>
<div class="row u" style="top:393px">
<div class="k"></div>
<span style="top:1px;letter-spacing:0.22px;left:69.0px">Metals</span>
<span style="top:1px;letter-spacing:0.00px;left:167.0px">200.8 Metals</span>
<span style="top:1px;letter-spacing:-0.08px;left:238.5px">7440-38-2</span>
<span style="top:1px;letter-spacing:0.05px;left:309.0px">Arsenic</span>
<div class="vl" style="left:0px;background:repeating-linear-gradient(transparent 0 1px,#a6a6a6 1px 2px)"></div>
<div class="vl" style="left:64px;background:repeating-linear-gradient(transparent 0 1px,#a6a6a6 1px 2px)"></div>
<div class="vl" style="left:162px;background:repeating-linear-gradient(transparent 0 1px,#a6a6a6 1px 2px)"></div>
<div class="vl" style="left:233px;background:repeating-linear-gradient(transparent 0 1px,#a6a6a6 1px 2px)"></div>
<div class="vl" style="left:304px;background:repeating-linear-gradient(transparent 0 1px,#a6a6a6 1px 2px)"></div>
<div class="vl" style="left:404px;background:repeating-linear-gradient(transparent 0 1px,#a6a6a6 1px 2px)"></div>
<div class="vl" style="left:478px;background:repeating-linear-gradient(transparent 0 1px,#a6a6a6 1px 2px)"></div>
<div class="vl" style="left:599px;background:repeating-linear-gradient(transparent 0 1px,#a6a6a6 1px 2px)"></div>
<div class="vl" style="left:694px;background:repeating-linear-gradient(transparent 0 1px,#a6a6a6 1px 2px)"></div>
<div class="vl" style="left:813px;background:repeating-linear-gradient(transparent 0 1px,#a6a6a6 1px 2px)"></div>
<div style="left:0;top:18px;width:814px;height:1px;background:repeating-linear-gradient(90deg,transparent 0 1px,#a6a6a6 1px 2px)"></div>
</div>
<div class="rh" style="top:412px"><svg width="9" height="12" viewBox="0 0 9 12" style="left:7px;top:4px"><path d="M5.5 0.8 L7.9 2 L4.2 8.6 L1.8 7.4 Z" fill="#fff" stroke="#000" stroke-width="1"/><path d="M4.6 2.2 L7 3.4" stroke="#000" stroke-width="1"/><path d="M1.3 7 L4.6 8.8 L1 11.6 Z" fill="#000"/></svg><div style="left:4px;top:14px;width:1px;height:1px;background:#000"></div><div style="left:6px;top:14px;width:1px;height:1px;background:#000"></div></div>
<div class="row s" style="top:412px">
<div class="k"></div><svg width="13" height="13" viewBox="0 0 13 13" style="left:26px;top:2px"><path d="M3.3 6.7 L5.4 8.7 L9.9 4.3" fill="none" stroke="#eaf1fb" stroke-width="0.95"/></svg>
<span style="top:1px;letter-spacing:0.22px;left:69.0px;color:#fff">Metals</span>
<span style="top:1px;letter-spacing:0.00px;left:167.0px;color:#fff">200.8 Metals</span>
<span style="top:1px;letter-spacing:-0.08px;left:238.5px;color:#fff">7440-41-7</span>
<span style="top:1px;letter-spacing:-0.47px;left:309.0px;color:#fff">Beryllium</span>
<div class="vl" style="left:0px;background:repeating-linear-gradient(transparent 0 1px,#d6d2c6 1px 2px)"></div>
<div class="vl" style="left:64px;background:repeating-linear-gradient(transparent 0 1px,#d6d2c6 1px 2px)"></div>
<div class="vl" style="left:162px;background:repeating-linear-gradient(transparent 0 1px,#d6d2c6 1px 2px)"></div>
<div class="vl" style="left:233px;background:repeating-linear-gradient(transparent 0 1px,#d6d2c6 1px 2px)"></div>
<div class="vl" style="left:304px;background:repeating-linear-gradient(transparent 0 1px,#d6d2c6 1px 2px)"></div>
<div class="vl" style="left:404px;background:repeating-linear-gradient(transparent 0 1px,#d6d2c6 1px 2px)"></div>
<div class="vl" style="left:478px;background:repeating-linear-gradient(transparent 0 1px,#d6d2c6 1px 2px)"></div>
<div class="vl" style="left:599px;background:repeating-linear-gradient(transparent 0 1px,#d6d2c6 1px 2px)"></div>
<div class="vl" style="left:694px;background:repeating-linear-gradient(transparent 0 1px,#d6d2c6 1px 2px)"></div>
<div class="vl" style="left:813px;background:repeating-linear-gradient(transparent 0 1px,#d6d2c6 1px 2px)"></div>
<div style="left:0;top:18px;width:814px;height:1px;background:repeating-linear-gradient(90deg,transparent 0 1px,#d6d2c6 1px 2px)"></div>
</div>
<div class="rh" style="top:431px"></div>
<div class="row u" style="top:431px">
<div class="k"></div>
<span style="top:1px;letter-spacing:0.22px;left:69.0px">Metals</span>
<span style="top:1px;letter-spacing:0.00px;left:167.0px">200.8 Metals</span>
<span style="top:1px;letter-spacing:-0.08px;left:238.5px">7440-43-9</span>
<span style="top:1px;letter-spacing:-0.10px;left:309.0px">Cadmium</span>
<div class="vl" style="left:0px;background:repeating-linear-gradient(transparent 0 1px,#a6a6a6 1px 2px)"></div>
<div class="vl" style="left:64px;background:repeating-linear-gradient(transparent 0 1px,#a6a6a6 1px 2px)"></div>
<div class="vl" style="left:162px;background:repeating-linear-gradient(transparent 0 1px,#a6a6a6 1px 2px)"></div>
<div class="vl" style="left:233px;background:repeating-linear-gradient(transparent 0 1px,#a6a6a6 1px 2px)"></div>
<div class="vl" style="left:304px;background:repeating-linear-gradient(transparent 0 1px,#a6a6a6 1px 2px)"></div>
<div class="vl" style="left:404px;background:repeating-linear-gradient(transparent 0 1px,#a6a6a6 1px 2px)"></div>
<div class="vl" style="left:478px;background:repeating-linear-gradient(transparent 0 1px,#a6a6a6 1px 2px)"></div>
<div class="vl" style="left:599px;background:repeating-linear-gradient(transparent 0 1px,#a6a6a6 1px 2px)"></div>
<div class="vl" style="left:694px;background:repeating-linear-gradient(transparent 0 1px,#a6a6a6 1px 2px)"></div>
<div class="vl" style="left:813px;background:repeating-linear-gradient(transparent 0 1px,#a6a6a6 1px 2px)"></div>
<div style="left:0;top:18px;width:814px;height:1px;background:repeating-linear-gradient(90deg,transparent 0 1px,#a6a6a6 1px 2px)"></div>
</div>
<div class="rh" style="top:450px"></div>
<div class="row u" style="top:450px">
<div class="k"></div>
<span style="top:1px;letter-spacing:0.22px;left:69.0px">Metals</span>
<span style="top:1px;letter-spacing:0.00px;left:167.0px">200.8 Metals</span>
<span style="top:1px;letter-spacing:-0.08px;left:238.5px">7440-47-3</span>
<span style="top:1px;letter-spacing:0.11px;left:309.0px">Chromium</span>
<div class="vl" style="left:0px;background:repeating-linear-gradient(transparent 0 1px,#a6a6a6 1px 2px)"></div>
<div class="vl" style="left:64px;background:repeating-linear-gradient(transparent 0 1px,#a6a6a6 1px 2px)"></div>
<div class="vl" style="left:162px;background:repeating-linear-gradient(transparent 0 1px,#a6a6a6 1px 2px)"></div>
<div class="vl" style="left:233px;background:repeating-linear-gradient(transparent 0 1px,#a6a6a6 1px 2px)"></div>
<div class="vl" style="left:304px;background:repeating-linear-gradient(transparent 0 1px,#a6a6a6 1px 2px)"></div>
<div class="vl" style="left:404px;background:repeating-linear-gradient(transparent 0 1px,#a6a6a6 1px 2px)"></div>
<div class="vl" style="left:478px;background:repeating-linear-gradient(transparent 0 1px,#a6a6a6 1px 2px)"></div>
<div class="vl" style="left:599px;background:repeating-linear-gradient(transparent 0 1px,#a6a6a6 1px 2px)"></div>
<div class="vl" style="left:694px;background:repeating-linear-gradient(transparent 0 1px,#a6a6a6 1px 2px)"></div>
<div class="vl" style="left:813px;background:repeating-linear-gradient(transparent 0 1px,#a6a6a6 1px 2px)"></div>
<div style="left:0;top:18px;width:814px;height:1px;background:repeating-linear-gradient(90deg,transparent 0 1px,#a6a6a6 1px 2px)"></div>
</div>
<div class="rh" style="top:469px"><svg width="9" height="12" viewBox="0 0 9 12" style="left:7px;top:4px"><path d="M5.5 0.8 L7.9 2 L4.2 8.6 L1.8 7.4 Z" fill="#fff" stroke="#000" stroke-width="1"/><path d="M4.6 2.2 L7 3.4" stroke="#000" stroke-width="1"/><path d="M1.3 7 L4.6 8.8 L1 11.6 Z" fill="#000"/></svg><div style="left:4px;top:14px;width:1px;height:1px;background:#000"></div><div style="left:6px;top:14px;width:1px;height:1px;background:#000"></div></div>
<div class="row s" style="top:469px">
<div class="k"></div><svg width="13" height="13" viewBox="0 0 13 13" style="left:26px;top:2px"><path d="M3.3 6.7 L5.4 8.7 L9.9 4.3" fill="none" stroke="#eaf1fb" stroke-width="0.95"/></svg>
<span style="top:1px;letter-spacing:0.22px;left:69.0px;color:#fff">Metals</span>
<span style="top:1px;letter-spacing:0.00px;left:167.0px;color:#fff">200.8 Metals</span>
<span style="top:1px;letter-spacing:-0.08px;left:238.5px;color:#fff">7440-50-8</span>
<span style="top:1px;letter-spacing:0.28px;left:309.0px;color:#fff">Copper</span>
<div class="vl" style="left:0px;background:repeating-linear-gradient(transparent 0 1px,#d6d2c6 1px 2px)"></div>
<div class="vl" style="left:64px;background:repeating-linear-gradient(transparent 0 1px,#d6d2c6 1px 2px)"></div>
<div class="vl" style="left:162px;background:repeating-linear-gradient(transparent 0 1px,#d6d2c6 1px 2px)"></div>
<div class="vl" style="left:233px;background:repeating-linear-gradient(transparent 0 1px,#d6d2c6 1px 2px)"></div>
<div class="vl" style="left:304px;background:repeating-linear-gradient(transparent 0 1px,#d6d2c6 1px 2px)"></div>
<div class="vl" style="left:404px;background:repeating-linear-gradient(transparent 0 1px,#d6d2c6 1px 2px)"></div>
<div class="vl" style="left:478px;background:repeating-linear-gradient(transparent 0 1px,#d6d2c6 1px 2px)"></div>
<div class="vl" style="left:599px;background:repeating-linear-gradient(transparent 0 1px,#d6d2c6 1px 2px)"></div>
<div class="vl" style="left:694px;background:repeating-linear-gradient(transparent 0 1px,#d6d2c6 1px 2px)"></div>
<div class="vl" style="left:813px;background:repeating-linear-gradient(transparent 0 1px,#d6d2c6 1px 2px)"></div>
<div style="left:0;top:18px;width:814px;height:1px;background:repeating-linear-gradient(90deg,transparent 0 1px,#d6d2c6 1px 2px)"></div>
</div>
<div class="rh" style="top:488px"><svg width="9" height="12" viewBox="0 0 9 12" style="left:7px;top:4px"><path d="M5.5 0.8 L7.9 2 L4.2 8.6 L1.8 7.4 Z" fill="#fff" stroke="#000" stroke-width="1"/><path d="M4.6 2.2 L7 3.4" stroke="#000" stroke-width="1"/><path d="M1.3 7 L4.6 8.8 L1 11.6 Z" fill="#000"/></svg><div style="left:4px;top:14px;width:1px;height:1px;background:#000"></div><div style="left:6px;top:14px;width:1px;height:1px;background:#000"></div></div>
<div class="row s" style="top:488px">
<div class="k"></div><svg width="13" height="13" viewBox="0 0 13 13" style="left:26px;top:2px"><path d="M3.3 6.7 L5.4 8.7 L9.9 4.3" fill="none" stroke="#eaf1fb" stroke-width="0.95"/></svg>
<span style="top:1px;letter-spacing:0.22px;left:69.0px;color:#fff">Metals</span>
<span style="top:1px;letter-spacing:0.00px;left:167.0px;color:#fff">200.8 Metals</span>
<span style="top:1px;letter-spacing:-0.08px;left:238.5px;color:#fff">7440-66-6</span>
<span style="top:1px;letter-spacing:-0.09px;left:309.0px;color:#fff">Zinc</span>
<div class="vl" style="left:0px;background:repeating-linear-gradient(transparent 0 1px,#d6d2c6 1px 2px)"></div>
<div class="vl" style="left:64px;background:repeating-linear-gradient(transparent 0 1px,#d6d2c6 1px 2px)"></div>
<div class="vl" style="left:162px;background:repeating-linear-gradient(transparent 0 1px,#d6d2c6 1px 2px)"></div>
<div class="vl" style="left:233px;background:repeating-linear-gradient(transparent 0 1px,#d6d2c6 1px 2px)"></div>
<div class="vl" style="left:304px;background:repeating-linear-gradient(transparent 0 1px,#d6d2c6 1px 2px)"></div>
<div class="vl" style="left:404px;background:repeating-linear-gradient(transparent 0 1px,#d6d2c6 1px 2px)"></div>
<div class="vl" style="left:478px;background:repeating-linear-gradient(transparent 0 1px,#d6d2c6 1px 2px)"></div>
<div class="vl" style="left:599px;background:repeating-linear-gradient(transparent 0 1px,#d6d2c6 1px 2px)"></div>
<div class="vl" style="left:694px;background:repeating-linear-gradient(transparent 0 1px,#d6d2c6 1px 2px)"></div>
<div class="vl" style="left:813px;background:repeating-linear-gradient(transparent 0 1px,#d6d2c6 1px 2px)"></div>
<div style="left:0;top:18px;width:814px;height:1px;background:repeating-linear-gradient(90deg,transparent 0 1px,#d6d2c6 1px 2px)"></div>
</div>
<div class="rh" style="top:507px"><svg width="9" height="12" viewBox="0 0 9 12" style="left:7px;top:4px"><path d="M5.5 0.8 L7.9 2 L4.2 8.6 L1.8 7.4 Z" fill="#fff" stroke="#000" stroke-width="1"/><path d="M4.6 2.2 L7 3.4" stroke="#000" stroke-width="1"/><path d="M1.3 7 L4.6 8.8 L1 11.6 Z" fill="#000"/></svg><div style="left:4px;top:14px;width:1px;height:1px;background:#000"></div><div style="left:6px;top:14px;width:1px;height:1px;background:#000"></div></div>
<div class="row s" style="top:507px">
<div class="k"></div><svg width="13" height="13" viewBox="0 0 13 13" style="left:26px;top:2px"><path d="M3.3 6.7 L5.4 8.7 L9.9 4.3" fill="none" stroke="#eaf1fb" stroke-width="0.95"/></svg>
<span style="top:1px;letter-spacing:0.22px;left:69.0px;color:#fff">Metals</span>
<span style="top:1px;letter-spacing:0.00px;left:167.0px;color:#fff">200.8 Metals</span>
<span style="top:1px;letter-spacing:-0.08px;left:238.5px;color:#fff">7782-49-2</span>
<span style="top:1px;letter-spacing:-0.05px;left:309.0px;color:#fff">Selenium</span>
<div class="vl" style="left:0px;background:repeating-linear-gradient(transparent 0 1px,#d6d2c6 1px 2px)"></div>
<div class="vl" style="left:64px;background:repeating-linear-gradient(transparent 0 1px,#d6d2c6 1px 2px)"></div>
<div class="vl" style="left:162px;background:repeating-linear-gradient(transparent 0 1px,#d6d2c6 1px 2px)"></div>
<div class="vl" style="left:233px;background:repeating-linear-gradient(transparent 0 1px,#d6d2c6 1px 2px)"></div>
<div class="vl" style="left:304px;background:repeating-linear-gradient(transparent 0 1px,#d6d2c6 1px 2px)"></div>
<div class="vl" style="left:404px;background:repeating-linear-gradient(transparent 0 1px,#d6d2c6 1px 2px)"></div>
<div class="vl" style="left:478px;background:repeating-linear-gradient(transparent 0 1px,#d6d2c6 1px 2px)"></div>
<div class="vl" style="left:599px;background:repeating-linear-gradient(transparent 0 1px,#d6d2c6 1px 2px)"></div>
<div class="vl" style="left:694px;background:repeating-linear-gradient(transparent 0 1px,#d6d2c6 1px 2px)"></div>
<div class="vl" style="left:813px;background:repeating-linear-gradient(transparent 0 1px,#d6d2c6 1px 2px)"></div>
<div style="left:0;top:18px;width:814px;height:1px;background:repeating-linear-gradient(90deg,transparent 0 1px,#d6d2c6 1px 2px)"></div>
</div>
</div></div></body></html>
